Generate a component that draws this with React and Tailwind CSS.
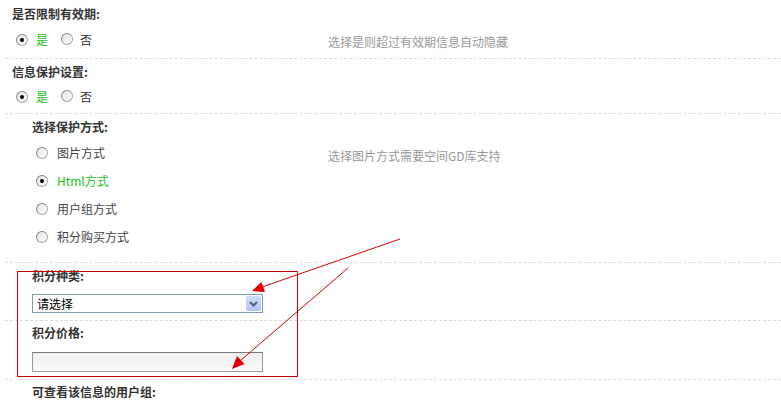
import React from 'react';

const Radio = ({ checked }) => (
  <span className="relative inline-flex h-[12px] w-[12px] shrink-0 items-center justify-center rounded-full border border-[#a9a9a9] border-l-[#8a8a8a] border-t-[#8a8a8a] bg-gradient-to-br from-[#e2e2e2] to-white">
    {checked && <span className="h-[4px] w-[4px] rounded-full bg-black" />}
  </span>
);

const YesNo = () => (
  <div className="flex items-center pl-[4px]">
    <Radio checked />
    <span className="ml-[8px] text-[#20c020]">是</span>
    <span className="ml-[13px]"><Radio /></span>
    <span className="ml-[7px] text-[#333]">否</span>
  </div>
);

const Option = ({ label, checked, help }) => (
  <div className="flex h-[28px] items-center">
    <div className="flex w-[296px] items-center pl-[4px]">
      <Radio checked={checked} />
      <span className={`ml-[9px] ${checked ? 'text-[#20c020]' : 'text-[#444]'}`}>{label}</span>
    </div>
    {help && <span className="mt-[5px] text-[#999]">{help}</span>}
  </div>
);

const App = () => {
  return (
    <div className="relative h-[402px] w-[781px] overflow-hidden bg-white font-['Noto_Sans_CJK_SC','Noto_Sans',sans-serif] text-[12px] leading-[20px]">
      <div className="ml-[5px]">
        {/* 有效期 */}
        <div className="border-b border-dashed border-[#dcdcdc] pb-[8px] pl-[7px] pt-[4px]">
          <div className="font-bold text-[#333]">是否限制有效期:</div>
          <div className="mt-[6px] flex h-[20px] items-center">
            <div className="w-[316px]"><YesNo /></div>
            <span className="mt-[3px] text-[#999]">选择是则超过有效期信息自动隐藏</span>
          </div>
        </div>

        {/* 信息保护 */}
        <div className="border-b border-dashed border-[#dcdcdc] pb-[6px] pl-[7px] pt-[3px]">
          <div className="font-bold text-[#333]">信息保护设置:</div>
          <div className="mt-[5px] flex h-[20px] items-center">
            <YesNo />
          </div>
        </div>

        {/* 保护方式 */}
        <div className="border-b border-dashed border-[#dcdcdc] pb-[11px] pl-[27px] pt-[3px]">
          <div className="font-bold text-[#333]">选择保护方式:</div>
          <div className="mt-[2px]">
            <Option label="图片方式" help="选择图片方式需要空间GD库支持" />
            <Option label="Html方式" checked />
            <Option label="用户组方式" />
            <Option label="积分购买方式" />
          </div>
        </div>

        {/* 积分种类 */}
        <div className="border-b border-dashed border-[#dcdcdc] pb-[7px] pl-[27px] pt-[3px]">
          <div className="font-bold text-[#333]">积分种类:</div>
          <div className="mt-[8px] flex h-[19px] w-[231px] items-center justify-between border border-[#7f9db9] bg-white pl-[4px] pr-[1px]">
            <span className="leading-[17px] text-black">请选择</span>
            <span className="flex h-[15px] w-[15px] items-center justify-center rounded-[2px] bg-gradient-to-b from-[#cfdcfa] to-[#b1c6f5]">
              <svg width="9" height="6" viewBox="0 0 9 6">
                <path d="M1 1 L4.5 4.5 L8 1" fill="none" stroke="#4d6185" strokeWidth="2" />
              </svg>
            </span>
          </div>
        </div>

        {/* 积分价格 */}
        <div className="border-b border-dashed border-[#dcdcdc] pb-[7px] pl-[27px] pt-[2px]">
          <div className="font-bold text-[#333]">积分价格:</div>
          <div className="mt-[9px] h-[20px] w-[231px] border border-[#9a9a9a] border-t-[#7a7a7a] bg-gradient-to-b from-[#f0f0f0] to-[#f9f9f9]" />
        </div>

        {/* 用户组 */}
        <div className="pl-[27px] pt-[2px]">
          <div className="font-bold text-[#333]">可查看该信息的用户组:</div>
        </div>
      </div>

      {/* annotation box */}
      <div className="absolute left-[17px] top-[271px] h-[106px] w-[281px] border border-[#cc0000]" />

      {/* annotation arrows */}
      <svg className="pointer-events-none absolute left-0 top-0" width="781" height="402">
        <line x1="400" y1="239" x2="262" y2="287" stroke="#dd0000" strokeWidth="1" />
        <polygon points="252,291 265,292 261.5,282" fill="#e00000" />
        <line x1="348" y1="268" x2="241" y2="360" stroke="#cc0000" strokeWidth="1" />
        <polygon points="232,369 244.5,364 237,356" fill="#e00000" />
      </svg>
    </div>
  );
};

export default App;
